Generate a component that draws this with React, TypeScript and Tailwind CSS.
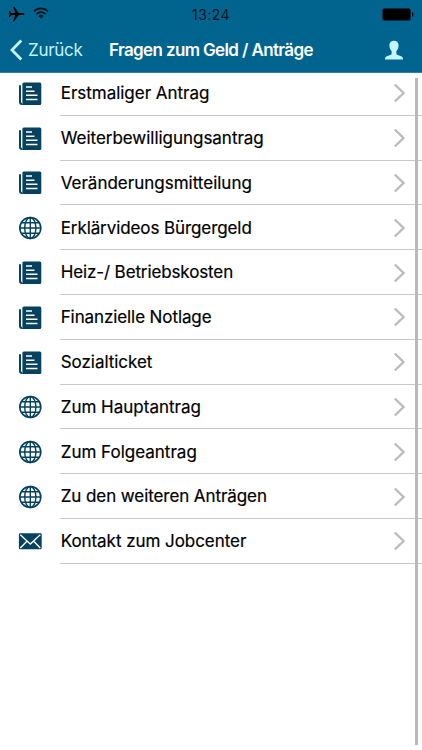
type IconName = "news" | "globe" | "mail";

interface MenuItem {
    label: string;
    icon: IconName;
    tracking: string;
}

const items: MenuItem[] = [
    { label: "Erstmaliger Antrag", icon: "news", tracking: "tracking-[-0.02px]" },
    { label: "Weiterbewilligungsantrag", icon: "news", tracking: "tracking-[-0.03px]" },
    { label: "Veränderungsmitteilung", icon: "news", tracking: "tracking-[0px]" },
    { label: "Erklärvideos Bürgergeld", icon: "globe", tracking: "tracking-[-0.09px]" },
    { label: "Heiz-/ Betriebskosten", icon: "news", tracking: "tracking-[-0.12px]" },
    { label: "Finanzielle Notlage", icon: "news", tracking: "tracking-[-0.1px]" },
    { label: "Sozialticket", icon: "news", tracking: "tracking-[-0.04px]" },
    { label: "Zum Hauptantrag", icon: "globe", tracking: "tracking-[0px]" },
    { label: "Zum Folgeantrag", icon: "globe", tracking: "tracking-[0px]" },
    { label: "Zu den weiteren Anträgen", icon: "globe", tracking: "tracking-[-0.08px]" },
    { label: "Kontakt zum Jobcenter", icon: "mail", tracking: "tracking-[-0.05px]" },
];

function NewsIcon() {
    return (
        <svg width="24" height="24" viewBox="0 0 24 24" fill="none">
            <path d="M2 3.2v16.8a2 2 0 0 0 2 2" stroke="#04425f" strokeWidth="2" />
            <path d="M5.8 .5h16a1.5 1.5 0 0 1 1.5 1.5v19.5a1.5 1.5 0 0 1-1.5 1.5H3.4a1.2 1.2 0 0 0 1-1.2V2A1.5 1.5 0 0 1 5.8 .5z" fill="#04425f" />
            <path d="M8 5h6M8 9.2h8.5M8 13.2h11.5M8 17.4h11.5" stroke="#fff" strokeWidth="1.5" />
        </svg>
    );
}

function GlobeIcon() {
    return (
        <svg width="24" height="24" viewBox="0 0 24 24" fill="none" stroke="#04425f" strokeWidth="1.4">
            <circle cx="12.3" cy="12" r="10.5" strokeWidth="1.6" />
            <ellipse cx="12.3" cy="12" rx="5.6" ry="10.5" />
            <path d="M12.3 1.4v21.2M1.7 12h21.2M3.3 6.8h18M3.3 17.2h18" />
        </svg>
    );
}

function MailIcon() {
    return (
        <svg width="24" height="24" viewBox="0 0 24 24" fill="none">
            <rect x=".9" y="3.3" width="22.8" height="16" rx="1.2" fill="#04425f" />
            <path d="M2.3 4.8l10 9.2 10-9.2M2.3 18l6.6-6.8M22.3 18l-6.6-6.8" stroke="#fff" strokeWidth="1.3" />
        </svg>
    );
}

const icons = {
    news: <NewsIcon />,
    globe: <GlobeIcon />,
    mail: <MailIcon />,
};

function StatusBar() {
    return (
        <div className="grid h-7 grid-cols-3 items-center">
            <div className="flex items-center gap-[9px] pl-[8px]">
                <svg width="17" height="16" viewBox="0 0 17 16" fill="#000">
                    <path d="M16.5 8c0-.7-.9-1.1-2-1.1h-3.8L6.3.7H5l2.3 6.2H3.5L1.9 5H.8l.8 3-.8 3h1.1l1.6-1.9h3.8L5 15.300h1.3l4.4-6.200h3.8c1.1 0 2-.4 2-1.100z" />
                </svg>
                <svg className="-ml-px mt-[-2px]" width="16" height="12" viewBox="0 0 16 12" fill="none" stroke="#08131a" strokeWidth="1.7">
                    <path d="M1 4.3a10 10 0 0 1 14 0M3.5 7a6.5 6.5 0 0 1 9 0" />
                    <path d="M5.5 8.9a3.600 3.600 0 0 1 5 0L8 11.500z" fill="#08131a" stroke="none" />
                </svg>
            </div>
            <span className="pt-px text-center text-[14px] leading-none tracking-[0.45px] text-[#04141e]">13:24</span>
            <div className="flex justify-end pr-[8px]">
                <svg width="32" height="13" viewBox="0 0 32 13">
                    <rect x=".5" y=".5" width="28" height="12" rx="2" fill="#000" stroke="#043149" />
                    <path d="M30 4.2c2 .6 2 4 0 4.6z" fill="#000" />
                </svg>
            </div>
        </div>
    );
}

function NavBar() {
    return (
        <div className="flex h-[45px] items-center border-b border-[#387d9e] pl-[9px] pr-[18px]">
            <button className="flex w-[100px] items-center gap-[5px] text-[17px] tracking-[-0.3px] text-[#c3f5ff]">
                <svg width="14" height="22" viewBox="0 0 14 22" fill="none">
                    <path d="M12.3 1.5L3 11l9.3 9.5" stroke="#c3f5ff" strokeWidth="2.8" />
                </svg>
                <span className="pt-[2px]">Zurück</span>
            </button>
            <h1 className="flex-1 whitespace-nowrap pt-[2px] text-[17px] font-semibold tracking-[-0.63px] text-white">
                Fragen zum Geld / Anträge
            </h1>
            <svg width="20" height="20" viewBox="0 0 20 20" fill="#c3f5ff">
                <path d="M10 .8c3 0 4.6 1.9 4.6 4.7 0 2.7-1 4.3-2.2 5.5v2.5c0 1 .8 1.5 2.6 2 2.6.7 4 1.2 4 3.5v.5H1V19c0-2.3 1.4-2.8 4-3.5 1.8-.5 2.6-1 2.6-2V11C6.4 9.8 5.4 8.2 5.4 5.5 5.4 2.7 7 .8 10 .8z" />
            </svg>
        </div>
    );
}

function MenuRow({ item }: { item: MenuItem }) {
    return (
        <li className="flex h-[44.8px] shrink-0 pl-[18px]">
            <span className="flex w-[42px] items-center pt-[1px]">{icons[item.icon]}</span>
            <div className="flex flex-1 items-center justify-between border-b border-[#c9c9cb] pr-[16px]">
                <span className={`whitespace-nowrap pl-[0.7px] pt-[2px] text-[17px] text-black [-webkit-text-stroke:0.2px_#000] ${item.tracking}`}>
                    {item.label}
                </span>
                <svg className="mt-px" width="13" height="20" viewBox="0 0 13 20" fill="none">
                    <path d="M1.8 1.5l8.7 8.5-8.7 8.5" stroke="#bcbcbe" strokeWidth="2.4" />
                </svg>
            </div>
        </li>
    );
}

export default function App() {
    return (
        <div className="relative flex h-[750px] w-[422px] flex-col overflow-hidden bg-white font-['Inter',sans-serif]">
            <header className="shrink-0 bg-[#00648f]">
                <StatusBar />
                <NavBar />
            </header>
            <ul className="-mt-[2px] flex flex-col">
                {items.map((item) => (
                    <MenuRow key={item.label} item={item} />
                ))}
            </ul>
            {/* Scroll indicator */}
            <div className="absolute right-[4px] top-[78px] h-[667px] w-[3.5px] bg-[#b9b9b9]" />
        </div>
    );
}
